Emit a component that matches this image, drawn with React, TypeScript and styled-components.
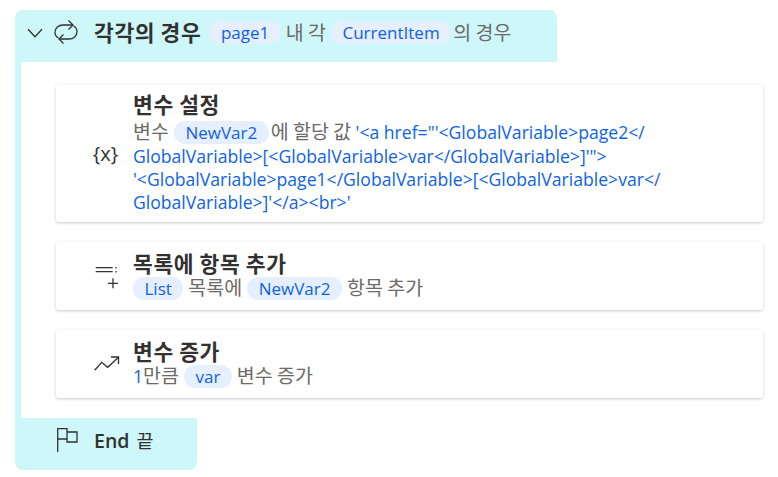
import React from "react";
import styled, { createGlobalStyle } from "styled-components";

const GlobalStyle = createGlobalStyle`
  html, body {
    margin: 0;
    padding: 0;
    background: #fff;
  }
  body {
    font-family: "Open Sans", "Noto Sans CJK KR", sans-serif;
    color: #323130;
  }
`;

const Page = styled.div`
  width: 778px;
  height: 477px;
  padding: 10px 15px 0;
  box-sizing: border-box;
  overflow: hidden;
`;

const Block = styled.div`
  display: flex;
  flex-direction: column;
  align-items: flex-start;
`;

const Header = styled.div`
  width: 542px;
  height: 52px;
  box-sizing: border-box;
  background: #cef7fa;
  border-radius: 8px 8px 0 0;
  display: flex;
  align-items: center;
  padding: 0 0 8px 13px;
  font-size: 17.6px;
  white-space: nowrap;
`;

const Icon = styled.svg`
  flex: none;
  display: block;
  overflow: visible;
  fill: none;
  stroke: #323130;
  stroke-width: 1.3;
`;

const LoopIcon = styled(Icon)`
  margin-left: 12px;
`;

const HeaderTitle = styled.span`
  font-family: "Noto Sans CJK KR", sans-serif;
  font-weight: 700;
  font-size: 21.5px;
  letter-spacing: 0.6px;
  line-height: 1;
  margin: 0 3px 0 16px;
`;

const Body = styled.div`
  width: 748px;
  box-sizing: border-box;
  border-left: 6px solid #cef7fa;
  padding: 23px 0 20px 35px;
  display: flex;
  flex-direction: column;
  gap: 20px;
`;

const Card = styled.div<{ $height: number }>`
  width: 707px;
  height: ${(p) => p.$height}px;
  box-sizing: border-box;
  background: #fff;
  border-radius: 3px;
  box-shadow: 0 1px 3px rgba(0, 0, 0, 0.22);
  display: flex;
  align-items: center;
`;

const IconSlot = styled.div`
  flex: none;
  width: 77px;
  display: flex;
  justify-content: center;
  padding-left: 22px;
  box-sizing: border-box;
`;

const Curly = styled.span`
  font-size: 20px;
  line-height: 24px;
  color: #323130;
  white-space: nowrap;
`;

const CardText = styled.div`
  display: flex;
  flex-direction: column;
`;

const Title = styled.div<{ $gap: number }>`
  font-family: "Noto Sans CJK KR", sans-serif;
  font-weight: 700;
  font-size: 21.5px;
  letter-spacing: 0.6px;
  line-height: 24px;
  margin-bottom: ${(p) => p.$gap}px;
  color: #323130;
`;

const Desc = styled.div`
  font-size: 17.6px;
  line-height: 23.4px;
  color: #605e5c;
  white-space: nowrap;
`;

const Plain = styled.span`
  font-family: "Noto Sans CJK KR", sans-serif;
  font-size: 19.5px;
  line-height: 1;
  color: #6c6a68;
`;

const Value = styled.span`
  color: #0f62e6;
`;

const Chip = styled.span<{ $first?: boolean; $tight?: boolean }>`
  display: inline-block;
  height: 23px;
  line-height: 23px;
  font-size: 17px;
  padding: 0 11.5px;
  margin: 0 ${(p) => (p.$tight ? 2 : 5)}px 0 ${(p) => (p.$first ? 0 : 5)}px;
  border-radius: 12px;
  background: #e5efff;
  color: #0f62e6;
`;

const EndBlock = styled.div`
  width: 182px;
  height: 52px;
  box-sizing: border-box;
  background: #cef7fa;
  border-radius: 0 0 8px 8px;
  display: flex;
  align-items: center;
  padding: 0 0 8px 42px;
`;

const EndLabel = styled.span`
  font-size: 19.5px;
  font-weight: 600;
  margin-left: 16px;
  color: #323130;
  white-space: nowrap;
`;

const EndSuffix = styled(Plain)`
  color: #323130;
  font-weight: 400;
  font-size: 18.5px;
  margin-left: 7px;
`;

const App = () => {
  return (
    <Page>
      <GlobalStyle />
      <Block>
        <Header>
          <Icon width="14" height="24" viewBox="0 0 14 24">
            <path d="M0 9.300 7 16.700 14 9.300" />
          </Icon>
          <LoopIcon width="24" height="24" viewBox="0 0 24 24">
            <path d="M18.500 5H9C4.500 5 1 8 1 12.500c0 2.500 1.500 4.500 3.500 5.500" />
            <path d="M14.500 .5 19 5l-4.500 4.500" />
            <path d="M5.500 19H15c4.500 0 8-3 8-7.500 0-2.500-1.500-4.500-3.500-5.500" />
            <path d="M9.500 14.500 5 19l4.500 4.500" />
          </LoopIcon>
          <HeaderTitle>각각의 경우</HeaderTitle>
          <Chip>page1</Chip>
          <Plain>내 각</Plain>
          <Chip $tight>CurrentItem</Chip>
          <Plain>의 경우</Plain>
        </Header>
        <Body>
          <Card $height={137}>
            <IconSlot>
              <Curly>{"{x}"}</Curly>
            </IconSlot>
            <CardText>
              <Title $gap={5}>변수 설정</Title>
              <Desc>
                <Plain>변수</Plain>
                <Chip $tight>NewVar2</Chip>
                <Plain>에 할당 값 </Plain>
                <Value>
                  {"'<a href=\"'<GlobalVariable>page2</"}
                  <br />
                  {"GlobalVariable>[<GlobalVariable>var</GlobalVariable>]'\">"}
                  <br />
                  {"'<GlobalVariable>page1</GlobalVariable>[<GlobalVariable>var</"}
                  <br />
                  {"GlobalVariable>]'</a><br>'"}
                </Value>
              </Desc>
            </CardText>
          </Card>
          <Card $height={68}>
            <IconSlot>
              <Icon width="24" height="24" viewBox="0 0 24 24">
                <path d="M1.700 3.700h17M1.700 7.700h17" />
                <path d="M22 3v1.500M22 7v1.500" />
                <path d="M19 14.300v10M14 19.300h10" />
              </Icon>
            </IconSlot>
            <CardText>
              <Title $gap={2}>목록에 항목 추가</Title>
              <Desc>
                <Chip $first>List</Chip>
                <Plain>목록에</Plain>
                <Chip>NewVar2</Chip>
                <Plain>항목 추가</Plain>
              </Desc>
            </CardText>
          </Card>
          <Card $height={68}>
            <IconSlot>
              <Icon width="24" height="24" viewBox="0 0 24 24">
                <path d="M.7 18.300 7.700 10.300 13.700 15.300 24.700 5" />
                <path d="M17 5h7.500v7" />
              </Icon>
            </IconSlot>
            <CardText>
              <Title $gap={2}>변수 증가</Title>
              <Desc>
                <Value>1</Value>
                <Plain>만큼</Plain>
                <Chip>var</Chip>
                <Plain>변수 증가</Plain>
              </Desc>
            </CardText>
          </Card>
        </Body>
        <EndBlock>
          <Icon width="21" height="24" viewBox="0 0 21 24">
            <path d="M.7 24V.7H10V11H.7" />
            <path d="M10 4h10v10H10v-3" />
          </Icon>
          <EndLabel>
            End<EndSuffix>끝</EndSuffix>
          </EndLabel>
        </EndBlock>
      </Block>
    </Page>
  );
};

export default App;
